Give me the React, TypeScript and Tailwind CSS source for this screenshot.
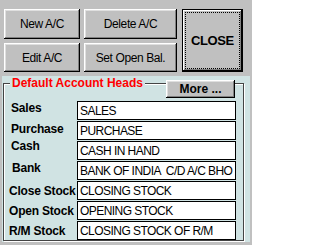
const bevel =
  'shadow-[inset_-1px_-1px_#000,inset_1px_1px_#fff,inset_-2px_-2px_#808080,inset_2px_2px_#dfdfdf]'

interface HeadRow {
  label: string
  value: string
  pad: string
  shift: string
}

const rows: HeadRow[] = [
  { label: 'Sales', value: 'SALES', pad: 'pl-[7px]', shift: 'mt-0' },
  { label: 'Purchase', value: 'PURCHASE', pad: 'pl-[7px]', shift: 'mt-[1px]' },
  { label: 'Cash', value: 'CASH IN HAND', pad: 'pl-[7px]', shift: '-mt-[2px]' },
  { label: 'Bank', value: 'BANK OF INDIA  C/D A/C BHO', pad: 'pl-[8px]', shift: 'mt-0' },
  { label: 'Close Stock', value: 'CLOSING STOCK', pad: 'pl-[5px]', shift: 'mt-[3px]' },
  { label: 'Open Stock', value: 'OPENING STOCK', pad: 'pl-[5px]', shift: 'mt-[3px]' },
  { label: 'R/M Stock', value: 'CLOSING STOCK OF R/M', pad: 'pl-[5px]', shift: 'mt-[3px]' },
]

function WinButton({ children, className }: { children: React.ReactNode; className: string }) {
  return (
    <button
      className={`flex items-center justify-center bg-[#c0c0c0] text-black leading-none ${bevel} ${className}`}
    >
      {children}
    </button>
  )
}

export default function App() {
  return (
    <div className="w-[252px] h-[245px] bg-[#c0c0c0] overflow-hidden font-['Liberation_Sans',Arial,sans-serif]">
      <div className="flex pt-[9px] pl-[4px] gap-[5px]">
        <div className="grid grid-cols-[76px_93px] grid-rows-[30px_29px] gap-x-[4px] gap-y-[4px]">
          <WinButton className="w-[76px] h-[30px] text-[12px] tracking-[-0.4px]">New A/C</WinButton>
          <WinButton className="w-[93px] h-[30px] text-[12px] tracking-[-0.4px]">Delete A/C</WinButton>
          <WinButton className="w-[76px] h-[29px] text-[12px] tracking-[-0.4px]">Edit A/C</WinButton>
          <WinButton className="w-[93px] h-[29px] text-[12px] tracking-[-0.4px]">Set Open Bal.</WinButton>
        </div>
        <button className="w-[61px] h-[63px] border border-black bg-[#c0c0c0] p-[2px] shadow-[inset_-1px_-1px_#000,inset_1px_1px_#fff,inset_-2px_-2px_#808080]">
          <div className="w-full h-full border border-dotted border-black flex items-center justify-center text-[13px] tracking-[-0.4px] font-bold text-black">
            CLOSE
          </div>
        </button>
      </div>

      <div className="mt-[4px] ml-[2px] w-[248px] h-[166px] bg-[#d0e3e3] pt-[7px]">
        <div className="ml-[1px] w-[241px] h-[158px] border border-[#444] shadow-[inset_1px_1px_#fff,1px_1px_#fff]">
          <div className="flex items-start -mt-[8px] pl-[6px] pr-[8px]">
            <span className="px-[2px] bg-[#d0e3e3] text-[12px] leading-[14px] font-bold text-[#ff0000]">
              Default Account Heads
            </span>
            <WinButton className="ml-auto mt-[4px] w-[69px] h-[18px] text-[12px] font-bold">
              More ...
            </WinButton>
          </div>

          <div className="mt-[3px] flex flex-col gap-[1px]">
            {rows.map((row) => (
              <div key={row.label} className="flex items-start h-[19px]">
                <div className={`w-[73px] shrink-0 ${row.pad}`}>
                  <span className={`block text-[12px] leading-[14px] font-bold text-black whitespace-nowrap tracking-[-0.2px] ${row.shift}`}>
                    {row.label}
                  </span>
                </div>
                <div className="w-[159px] h-[19px] border border-black bg-white pl-[2px] flex items-center overflow-hidden">
                  <span className="text-[12px] leading-[14px] tracking-[-0.55px] text-black whitespace-pre">{row.value}</span>
                </div>
              </div>
            ))}
          </div>
        </div>
      </div>
    </div>
  )
}
